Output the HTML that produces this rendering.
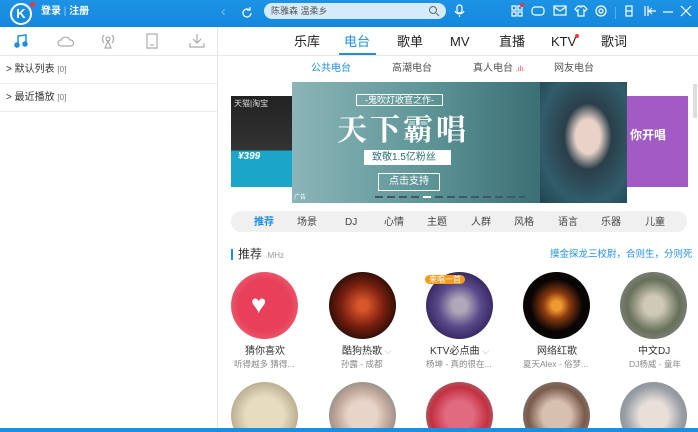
<!DOCTYPE html><html><head><meta charset="utf-8"><style>
*{margin:0;padding:0;box-sizing:border-box}
html,body{width:698px;height:432px;overflow:hidden}
body{font-family:"Liberation Sans","Noto Sans CJK SC",sans-serif;background:#fff;position:relative;color:#333}
.abs{position:absolute}
.top{left:0;top:0;width:698px;height:27px;background:linear-gradient(#1d93e6,#1488dc)}
.t{position:absolute;white-space:nowrap;line-height:1.15;margin-top:2px}
.ic{position:absolute;stroke:#fff;fill:none;stroke-width:1.2}
.li{stroke:#aaa;fill:none;stroke-width:1.2;position:absolute}
.circ{position:absolute;width:67px;height:67px;border-radius:50%}
.cat{position:absolute;top:217px;font-size:10px;color:#444;line-height:12px;white-space:nowrap}
</style></head><body>
<div class="abs top"></div>
<div class="abs" style="left:10px;top:3px;width:22px;height:22px;border:2px solid #fff;border-radius:50%;color:#fff;font-weight:bold;font-size:13px;text-align:center;line-height:18px">K</div>
<div class="abs" style="left:30px;top:2px;width:5px;height:5px;border-radius:50%;background:#f33"></div>
<div class="t" style="left:41px;top:4px;color:#fff;font-size:10px;font-weight:bold">登录 <span style="opacity:.6;font-weight:normal">|</span> 注册</div>
<div class="t" style="left:221px;top:1px;color:#7cc0f0;font-size:14px">‹</div>
<svg class="ic" style="left:240px;top:6px" width="14" height="14"><path d="M11 7a4 4 0 1 1-1.5-3.1M10 1v3h-3"/></svg>
<div class="abs" style="left:264px;top:3px;width:182px;height:16px;border-radius:8px;background:#d5ebfb"></div>
<div class="t" style="left:271px;top:4px;font-size:9px;color:#555">陈雅森 温柔乡</div>
<svg class="abs" style="left:428px;top:5px" width="12" height="12" stroke="#666" fill="none"><circle cx="5" cy="5" r="3.5"/><path d="M8 8l3 3"/></svg>
<svg class="ic" style="left:454px;top:4px" width="12" height="14"><rect x="3" y="1" width="5" height="8" rx="2.5"/><path d="M1 7a5 5 0 0 0 9 0M5.5 11v2"/></svg>
<svg class="ic" style="left:511px;top:5px" width="12" height="12"><rect x="1" y="1" width="4" height="4"/><rect x="7" y="1" width="4" height="4"/><rect x="1" y="7" width="4" height="4"/><rect x="7" y="7" width="4" height="4"/></svg>
<div class="abs" style="left:520px;top:3px;width:4px;height:4px;border-radius:50%;background:#f33"></div>
<svg class="ic" style="left:531px;top:5px" width="14" height="12"><rect x="1" y="2" width="12" height="8" rx="3"/></svg>
<svg class="ic" style="left:553px;top:5px" width="14" height="12"><rect x="1" y="1" width="12" height="9"/><path d="M1 2l6 4 6-4"/></svg>
<svg class="ic" style="left:574px;top:5px" width="14" height="12"><path d="M4 1L1 4l2 2 1-1v6h6V5l1 1 2-2-3-3H8a1 1 0 0 1-2 0z"/></svg>
<svg class="ic" style="left:594px;top:4px" width="14" height="14"><circle cx="7" cy="7" r="5"/><circle cx="7" cy="7" r="2"/></svg>
<div class="abs" style="left:615px;top:7px;width:1px;height:12px;background:#5ab0ec"></div>
<svg class="ic" style="left:624px;top:5px" width="10" height="12"><rect x="2" y="1" width="6" height="10"/><path d="M2 6h6"/></svg>
<svg class="ic" style="left:643px;top:5px" width="14" height="12"><path d="M2 1v10M5 1v10M13 6H7M9 3L6 6l3 3"/></svg>
<svg class="ic" style="left:662px;top:5px" width="12" height="12"><path d="M1 7h10"/></svg>
<svg class="ic" style="left:680px;top:5px" width="12" height="12"><path d="M1 1l10 10M11 1L1 11"/></svg>
<!-- left panel -->
<div class="abs" style="left:217px;top:27px;width:1px;height:401px;background:#e4e4e4"></div>
<div class="abs" style="left:0;top:55px;width:217px;height:1px;background:#e8e8e8"></div>
<svg class="abs" style="left:14px;top:34px" width="14" height="14" fill="#1f8fe6" stroke="#1f8fe6" stroke-width="1.5"><path d="M4 11V2l8-1v9" fill="none"/><circle cx="3" cy="11" r="2"/><circle cx="11" cy="10" r="2"/></svg>
<svg class="li" style="left:57px;top:36px" width="18" height="12"><path d="M4 10a3 3 0 0 1 0-6 5 5 0 0 1 9 0 3 3 0 0 1 1 6z"/></svg>
<svg class="li" style="left:100px;top:33px" width="16" height="16"><circle cx="8" cy="6" r="2"/><path d="M4 2a6 6 0 0 0 0 8M12 2a6 6 0 0 1 0 8M8 8l-3 7h6z"/></svg>
<svg class="li" style="left:145px;top:33px" width="14" height="16"><rect x="2" y="1" width="10" height="14"/><path d="M5 12h4"/></svg>
<svg class="li" style="left:189px;top:33px" width="16" height="16"><path d="M8 1v9M4 6l4 4 4-4M1 10v4h14v-4"/></svg>
<div class="t" style="left:6px;top:62px;font-size:10px;color:#333">&gt; 默认列表 <span style="font-size:8px;color:#777">[0]</span></div>
<div class="abs" style="left:0;top:83px;width:217px;height:1px;background:#ececec"></div>
<div class="t" style="left:6px;top:90px;font-size:10px;color:#333">&gt; 最近播放 <span style="font-size:8px;color:#777">[0]</span></div>
<div class="abs" style="left:0;top:111px;width:217px;height:1px;background:#ececec"></div>
<!-- nav -->
<div class="abs" style="left:218px;top:55px;width:480px;height:1px;background:#e8e8e8"></div>
<div class="t" style="left:294px;top:33px;font-size:13px;color:#222">乐库</div>
<div class="t" style="left:344px;top:33px;font-size:13px;color:#1f8fe6">电台</div>
<div class="abs" style="left:339px;top:53px;width:37px;height:2px;background:#1f8fe6"></div>
<div class="t" style="left:397px;top:33px;font-size:13px;color:#222">歌单</div>
<div class="t" style="left:450px;top:33px;font-size:13px;color:#222">MV</div>
<div class="t" style="left:499px;top:33px;font-size:13px;color:#222">直播</div>
<div class="t" style="left:551px;top:33px;font-size:13px;color:#222">KTV</div>
<div class="abs" style="left:575px;top:34px;width:4px;height:4px;border-radius:50%;background:#f33"></div>
<div class="t" style="left:601px;top:33px;font-size:13px;color:#222">歌词</div>
<div class="t" style="left:311px;top:61px;font-size:10px;color:#1f8fe6">公共电台</div>
<div class="t" style="left:392px;top:61px;font-size:10px;color:#555">高潮电台</div>
<div class="t" style="left:473px;top:61px;font-size:10px;color:#555">真人电台 <span style="color:#e33;font-size:7px">.ılı.</span></div>
<div class="t" style="left:554px;top:61px;font-size:10px;color:#555">网友电台</div>
<div class="abs" style="left:693px;top:84px;width:4px;height:34px;background:#ddd"></div>
<!-- banners -->
<div class="abs" style="left:231px;top:96px;width:61px;height:91px;background:linear-gradient(#222 0,#333 60%,#1aa6c8 60%)"></div>
<div class="t" style="left:234px;top:97px;font-size:8px;color:#ddd">天猫|淘宝</div>
<div class="t" style="left:238px;top:149px;font-size:10px;color:#fff;font-style:italic;font-weight:bold">¥399</div>
<div class="abs" style="left:627px;top:96px;width:61px;height:91px;background:#a25bc4"></div>
<div class="t" style="left:630px;top:127px;font-size:12px;color:#fff;font-weight:bold">你开唱</div>
<div class="abs" style="left:292px;top:82px;width:335px;height:121px;background:linear-gradient(90deg,#8bb5b8,#5e9597 40%,#3f7378 70%,#2d5860)"></div>
<div class="abs" style="left:540px;top:82px;width:87px;height:121px;background:radial-gradient(ellipse at 55% 45%,#e9d3c8 0 18%,#2a3f4a 35%,#315c6a 70%,#1f4450)"></div>
<div class="t" style="left:356px;top:92px;font-size:9px;color:#fff;border:1px solid #fff;padding:0 8px">-鬼吹灯收官之作-</div>
<div class="t" style="left:337px;top:108px;font-size:30px;color:#fff;font-family:'Noto Serif CJK SC',serif;font-weight:bold;letter-spacing:3px">天下霸唱</div>
<div class="abs" style="left:364px;top:150px;width:87px;height:15px;background:#fff"></div>
<div class="t" style="left:372px;top:150px;font-size:10px;color:#2a6f78">致敬1.5亿粉丝</div>
<div class="t" style="left:378px;top:171px;font-size:10px;color:#fff;border:1px solid #fff;padding:2px 10px">点击支持</div>
<div class="t" style="left:294px;top:193px;font-size:6px;color:#fff">广告</div>
<div class="abs" style="left:375px;top:196px;width:150px;height:2px;background:repeating-linear-gradient(90deg,#456 0 8px,transparent 8px 12px)"></div>
<div class="abs" style="left:423px;top:196px;width:8px;height:2px;background:#fff"></div>
<!-- categories -->
<div class="abs" style="left:231px;top:211px;width:456px;height:21px;border-radius:10px;background:#f0f0f0"></div>
<div class="cat" style="left:254px;color:#1f8fe6;font-weight:bold">推荐</div>
<div class="cat" style="left:297px">场景</div>
<div class="cat" style="left:345px">DJ</div>
<div class="cat" style="left:384px">心情</div>
<div class="cat" style="left:427px">主题</div>
<div class="cat" style="left:471px">人群</div>
<div class="cat" style="left:514px">风格</div>
<div class="cat" style="left:558px">语言</div>
<div class="cat" style="left:601px">乐器</div>
<div class="cat" style="left:645px">儿童</div>
<div class="abs" style="left:231px;top:249px;width:2px;height:11px;background:#1f8fe6"></div>
<div class="t" style="left:238px;top:246px;font-size:12px;color:#333">推荐 <span style="font-size:8px;color:#999">.MHz</span></div>
<div class="t" style="left:550px;top:248px;font-size:9.5px;color:#1f8fe6">摸金探龙三校尉，合则生，分则死</div>
<!-- circles row1 -->
<div class="circ" style="left:231px;top:272px;background:radial-gradient(#e8405a 55%,#f07a85)"></div>
<div class="t" style="left:251px;top:288px;font-size:26px;color:#fff">♥</div>
<div class="circ" style="left:329px;top:272px;background:radial-gradient(#d8572a 10%,#7a1f0f 45%,#1a0a05 80%)"></div>
<div class="circ" style="left:426px;top:272px;background:radial-gradient(#b0a8b8 15%,#5a4a8a 45%,#2c1f55 80%)"></div>
<div class="t" style="left:425px;top:273px;font-size:8px;color:#fff;background:#f59a1a;border-radius:6px;padding:0 4px">来唱一首</div>
<div class="circ" style="left:523px;top:272px;background:radial-gradient(#f09a30 10%,#8a3a10 28%,#0a0505 55%)"></div>
<div class="circ" style="left:620px;top:272px;background:radial-gradient(#cfcab8 20%,#67705a 55%,#888 85%)"></div>
<div class="t" style="left:245px;top:344px;font-size:10px;color:#333">猜你喜欢</div>
<div class="t" style="left:234px;top:358px;font-size:8.5px;color:#888">听得越多 猜得...</div>
<div class="t" style="left:342px;top:344px;font-size:10px;color:#333">酷狗热歌 <span style="font-size:9px;color:#aaa">⌵</span></div>
<div class="t" style="left:341px;top:358px;font-size:8.5px;color:#888">孙露 - 成都</div>
<div class="t" style="left:430px;top:344px;font-size:10px;color:#333">KTV必点曲 <span style="font-size:9px;color:#aaa">⌵</span></div>
<div class="t" style="left:426px;top:358px;font-size:8.5px;color:#888">杨坤 - 真的很在...</div>
<div class="t" style="left:537px;top:344px;font-size:10px;color:#333">网络红歌</div>
<div class="t" style="left:523px;top:358px;font-size:8.5px;color:#888">夏天Alex - 俗梦...</div>
<div class="t" style="left:638px;top:344px;font-size:10px;color:#333">中文DJ</div>
<div class="t" style="left:629px;top:358px;font-size:8.5px;color:#888">DJ杨威 - 童年</div>
<!-- row2 -->
<div class="circ" style="left:231px;top:382px;background:radial-gradient(#e8dcc0 40%,#b5a98c 75%)"></div>
<div class="circ" style="left:329px;top:382px;background:radial-gradient(#e8d5ca 30%,#c0a89a 55%,#888 80%)"></div>
<div class="circ" style="left:426px;top:382px;background:radial-gradient(#e06a80 30%,#c43040 60%,#888 85%)"></div>
<div class="circ" style="left:523px;top:382px;background:radial-gradient(#d8c0b0 30%,#7a5a4a 60%,#888 85%)"></div>
<div class="circ" style="left:620px;top:382px;background:radial-gradient(#e8e0d8 30%,#9aa0a8 60%,#888 85%)"></div>
<div class="abs" style="left:0;top:428px;width:698px;height:4px;background:#1a8ee0"></div>
</body></html>
